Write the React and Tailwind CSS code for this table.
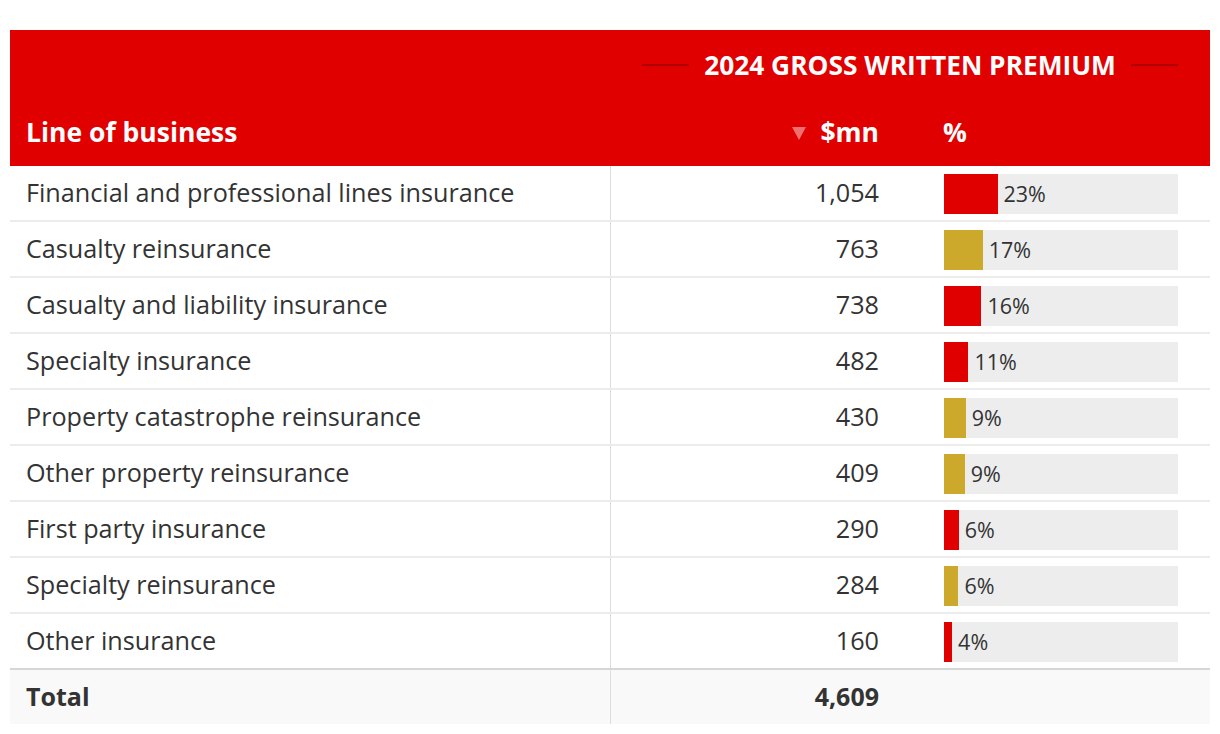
import React from "react";

const rows = [
  ["Financial and professional lines insurance", 1054, "23%", "red"],
  ["Casualty reinsurance", 763, "17%", "gold"],
  ["Casualty and liability insurance", 738, "16%", "red"],
  ["Specialty insurance", 482, "11%", "red"],
  ["Property catastrophe reinsurance", 430, "9%", "gold"],
  ["Other property reinsurance", 409, "9%", "gold"],
  ["First party insurance", 290, "6%", "red"],
  ["Specialty reinsurance", 284, "6%", "gold"],
  ["Other insurance", 160, "4%", "red"],
];
const total = 4609;

export default function App() {
  return (
    <div className="bg-white w-[1220px] h-[734px] pt-[30px] px-[10px] text-[#333]" style={{ fontFamily: '"Open Sans", "Noto Sans", sans-serif' }}>
      <div className="w-[1200px]">
        <div className="bg-[#e00000] text-white">
          <div className="grid grid-cols-[600px_600px] h-[70px]">
            <div />
            <div className="flex items-center px-8">
              <div className="flex-1 h-[2px] bg-[#b00000]" />
              <div className="px-[15px] text-[26.3px] font-bold leading-none">2024 GROSS WRITTEN PREMIUM</div>
              <div className="flex-1 h-[2px] bg-[#b00000]" />
            </div>
          </div>
          <div className="grid grid-cols-[600px_300px_300px] h-[66px] items-center text-[26.5px] font-bold">
            <div className="pl-[16px]">Line of business</div>
            <div className="flex items-center justify-end pr-[31px] gap-[14px]">
              <svg width="14" height="14" viewBox="0 0 14 14"><path d="M0 1 L14 1 L7 14 Z" fill="#f07070" /></svg>
              <span>$mn</span>
            </div>
            <div className="pl-[33px]">%</div>
          </div>
        </div>
        {rows.map(([name, val, pct, color], i) => (
          <div key={name} className={`grid grid-cols-[600px_300px_300px] h-[56px] items-stretch ${i === rows.length - 1 ? "border-b-2 border-[#d6d6d6]" : "border-b-2 border-[#ececec]"}`}>
            <div className="flex items-center pl-[16px] text-[25.2px]">{name}</div>
            <div className="flex items-center justify-end pr-[31px] text-[25.2px] border-l border-[#dddddd]">{val.toLocaleString("en-US")}</div>
            <div className="flex items-center pl-[34px] pt-[2px]">
              <div className="w-[234px] h-[40px] bg-[#ededed] flex items-center">
                <div className={`h-full ${color === "red" ? "bg-[#e00000]" : "bg-[#cca82b]"}`} style={{ width: `${(val / total) * 234}px` }} />
                <span className="pl-[6px] text-[21.5px] leading-none">{pct}</span>
              </div>
            </div>
          </div>
        ))}
        <div className="grid grid-cols-[600px_300px_300px] h-[54px] bg-[#f9f9f9] font-bold text-[25px]">
          <div className="flex items-center pl-[16px]">Total</div>
          <div className="flex items-center justify-end pr-[31px] border-l border-[#dddddd]">{total.toLocaleString("en-US")}</div>
          <div />
        </div>
      </div>
    </div>
  );
}
